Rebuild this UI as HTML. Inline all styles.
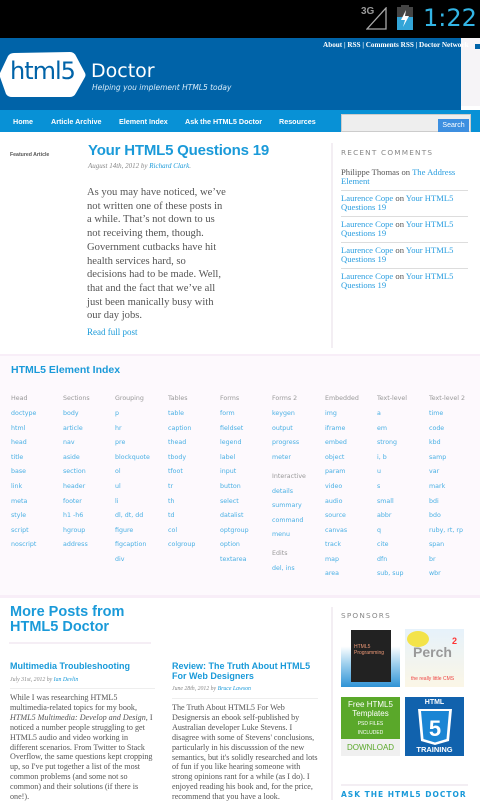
<!DOCTYPE html>
<html><head><meta charset="utf-8">
<style>
*{margin:0;padding:0;box-sizing:border-box}
body{width:480px;height:800px;overflow:hidden;background:#fff;position:relative;font-family:"Liberation Sans",sans-serif}
.a{position:absolute;white-space:nowrap}
.serif{font-family:"Liberation Serif",serif}
.blue{color:#1a9ad9}
.ei{font-size:6.3px;color:#4ab0e4;font-family:"DejaVu Sans",sans-serif}
.eh{font-size:6.3px;color:#999;font-family:"DejaVu Sans",sans-serif}
.ttl{font-family:"Liberation Sans",sans-serif;color:#1a9ad9}
.cm{font-size:8.6px;line-height:9px;color:#555}
.cm b{font-weight:normal;color:#2a9ee0}
.hr{position:absolute;height:1px;background:#ddd}
</style></head><body>
<div class="a" style="left:0;top:0;width:480px;height:38px;background:#000"></div>
<div class="a" style="left:361px;top:6px;font-size:10px;color:#999;font-weight:bold">3G</div>
<svg class="a" style="left:366px;top:7px" width="22" height="24"><path d="M20 1 L20 22 L1 22 Z" fill="none" stroke="#aaa" stroke-width="1.3"/></svg>
<div class="a" style="left:397px;top:7px;width:16px;height:23px;background:#444"></div>
<div class="a" style="left:401px;top:5px;width:8px;height:3px;background:#444"></div>
<div class="a" style="left:397px;top:17px;width:16px;height:13px;background:#33a5d8"></div>
<svg class="a" style="left:397px;top:7px" width="16" height="23"><path d="M9 3 L4 13 H8 L6 20 L12 9 H8 Z" fill="#fff"/></svg>
<div class="a" style="left:423px;top:4px;font-size:24px;color:#33b5e5;font-family:'DejaVu Sans',sans-serif">1:22</div>
<div class="a" style="left:0;top:38px;width:461px;height:72px;background:#0063a8"></div>
<div class="a" style="left:461px;top:38px;width:19px;height:68px;background:#f6f4f7"></div>
<div class="a" style="left:0;top:38px;width:474px;height:14px;overflow:hidden"><div class="a serif" style="left:323px;top:3px;font-size:7.2px;color:#fff;font-weight:bold">About | RSS | Comments RSS | Doctor Network</div></div>
<div class="a" style="left:475px;top:44px;width:5px;height:5px;background:#0063a8"></div>
<svg class="a" style="left:0;top:51px" width="86" height="47"><path d="M14 2 L70 1 Q74 1 76 5 L85 22 Q86 24 85 26 L76 42 Q74 46 70 46 L12 46 Q8 46 6 43 L0 26 Q-1 24 0 22 L8 5 Q10 2 14 2Z" fill="#fff"/></svg>
<div class="a" style="left:10px;top:57px;font-size:24px;color:#0063a8;font-family:'DejaVu Sans',sans-serif;letter-spacing:-1px">html5</div>
<div class="a" style="left:91px;top:60px;font-size:19px;color:#fff;font-family:'DejaVu Sans',sans-serif">Doctor</div>
<div class="a" style="left:92px;top:83px;font-size:7.5px;color:#d8ecfa;font-style:italic;font-family:'DejaVu Sans',sans-serif">Helping you implement HTML5 today</div>
<div class="a" style="left:0;top:110px;width:480px;height:22px;background:#0891d6"></div>
<div class="a" style="left:13px;top:117px;font-size:7.2px;color:#fff;font-weight:bold">Home</div>
<div class="a" style="left:51px;top:117px;font-size:7.2px;color:#fff;font-weight:bold">Article Archive</div>
<div class="a" style="left:119px;top:117px;font-size:7.2px;color:#fff;font-weight:bold">Element Index</div>
<div class="a" style="left:185px;top:117px;font-size:7.2px;color:#fff;font-weight:bold">Ask the HTML5 Doctor</div>
<div class="a" style="left:279px;top:117px;font-size:7.2px;color:#fff;font-weight:bold">Resources</div>
<div class="a" style="left:341px;top:114px;width:130px;height:18px;background:#eee;border:1px solid #ccc"></div>
<div class="a" style="left:438px;top:119px;width:31px;height:13px;background:#3d8fe0;color:#fff;font-size:7px;text-align:center;line-height:13px">Search</div>
<div class="a" style="left:10px;top:152px;font-size:5.2px;color:#555;font-weight:bold">Featured Article</div>
<div class="a ttl" style="left:88px;top:142px;font-size:15px;font-weight:bold;letter-spacing:-0.2px">Your HTML5 Questions 19</div>
<div class="a serif" style="left:88px;top:162px;font-size:7px;color:#888;font-style:italic">August 14th, 2012 by <span class="blue">Richard Clark</span>.</div>
<div class="a serif" style="left:87px;top:186px;font-size:10.6px;line-height:13.7px;color:#555;white-space:normal;width:140px">As you may have noticed, we’ve not written one of these posts in a while. That’s not down to us not receiving them, though. Government cutbacks have hit health services hard, so decisions had to be made. Well, that and the fact that we’ve all just been manically busy with our day jobs.</div>
<div class="a serif blue" style="left:87px;top:327px;font-size:9px">Read full post</div>
<div class="a" style="left:331px;top:143px;width:2px;height:205px;background:#f3eef3"></div>
<div class="a" style="left:341px;top:148px;font-size:7.3px;color:#888;letter-spacing:1.2px;font-family:'DejaVu Sans',sans-serif">RECENT COMMENTS</div>
<div class="a serif cm" style="left:341px;top:168px">Philippe Thomas on <b>The Address</b><br><b>Element</b></div>
<div class="hr" style="left:341px;top:190px;width:127px"></div>
<div class="a serif cm" style="left:341px;top:194px"><b>Laurence Cope</b> on <b>Your HTML5</b><br><b>Questions 19</b></div>
<div class="hr" style="left:341px;top:216px;width:127px"></div>
<div class="a serif cm" style="left:341px;top:220px"><b>Laurence Cope</b> on <b>Your HTML5</b><br><b>Questions 19</b></div>
<div class="hr" style="left:341px;top:242px;width:127px"></div>
<div class="a serif cm" style="left:341px;top:246px"><b>Laurence Cope</b> on <b>Your HTML5</b><br><b>Questions 19</b></div>
<div class="hr" style="left:341px;top:268px;width:127px"></div>
<div class="a serif cm" style="left:341px;top:272px"><b>Laurence Cope</b> on <b>Your HTML5</b><br><b>Questions 19</b></div>
<div class="a" style="left:0;top:354px;width:480px;height:243px;background:#fdf9fd"></div>
<div class="a" style="left:0;top:354px;width:480px;height:2px;background:#f8eef8"></div>
<div class="a ttl" style="left:11px;top:364px;font-size:10.5px;font-weight:bold;color:#1a9ad9">HTML5 Element Index</div>
<div id="ei"></div>
<script>
var cols=[[11,"Head",["doctype","html","head","title","base","link","meta","style","script","noscript"]],
[63,"Sections",["body","article","nav","aside","section","header","footer","h1 -h6","hgroup","address"]],
[115,"Grouping",["p","hr","pre","blockquote","ol","ul","li","dl, dt, dd","figure","figcaption","div"]],
[168,"Tables",["table","caption","thead","tbody","tfoot","tr","th","td","col","colgroup"]],
[220,"Forms",["form","fieldset","legend","label","input","button","select","datalist","optgroup","option","textarea"]],
[325,"Embedded",["img","iframe","embed","object","param","video","audio","source","canvas","track","map","area"]],
[377,"Text-level",["a","em","strong","i, b","u","s","small","abbr","q","cite","dfn","sub, sup"]],
[429,"Text-level 2",["time","code","kbd","samp","var","mark","bdi","bdo","ruby, rt, rp","span","br","wbr"]]];
var ys=[414,429,443,458,472,487,502,516,531,545,560,574];
var h="";
cols.forEach(function(c){h+='<div class="a eh" style="left:'+c[0]+'px;top:395px">'+c[1]+'</div>';
c[2].forEach(function(t,i){h+='<div class="a ei" style="left:'+c[0]+'px;top:'+(ys[i]-4)+'px">'+t+'</div>';});});
var f2=[["h","Forms 2",399],["i","keygen",414],["i","output",429],["i","progress",443],["i","meter",458],["h","Interactive",477],["i","details",492],["i","summary",506],["i","command",521],["i","menu",535],["h","Edits",554],["i","del, ins",569]];
f2.forEach(function(e){h+='<div class="a '+(e[0]=="h"?"eh":"ei")+'" style="left:272px;top:'+(e[2]-4)+'px">'+e[1]+'</div>';});
document.getElementById("ei").innerHTML=h;
</script>
<div class="a" style="left:0;top:595px;width:480px;height:3px;background:#f8eef8"></div>
<div class="a ttl" style="left:10px;top:605px;font-size:14.5px;line-height:15px;font-weight:bold;color:#1a9ad9">More Posts from<br>HTML5 Doctor</div>
<div class="a" style="left:9px;top:642px;width:142px;height:2px;background:#f5eef5"></div>
<div class="a ttl" style="left:10px;top:661px;font-size:9px;font-weight:bold">Multimedia Troubleshooting</div>
<div class="a serif" style="left:10px;top:677px;font-size:5.8px;color:#888;font-style:italic">July 31st, 2012 by <span class="blue">Ian Devlin</span></div>
<div class="hr" style="left:10px;top:688px;width:145px;background:#eee"></div>
<div class="a serif" style="left:10px;top:693px;width:147px;white-space:normal;font-size:8.1px;line-height:9.9px;color:#555">While I was researching HTML5 multimedia-related topics for my book, <i>HTML5 Multimedia: Develop and Design</i>, I noticed a number people struggling to get HTML5 audio and video working in different scenarios. From Twitter to Stack Overflow, the same questions kept cropping up, so I've put together a list of the most common problems (and some not so common) and their solutions (if there is one!).</div>
<div class="a ttl" style="left:172px;top:661px;font-size:9px;line-height:10px;font-weight:bold">Review: The Truth About HTML5<br>For Web Designers</div>
<div class="a serif" style="left:172px;top:686px;font-size:5.8px;color:#888;font-style:italic">June 28th, 2012 by <span class="blue">Bruce Lawson</span></div>
<div class="hr" style="left:172px;top:698px;width:146px;background:#eee"></div>
<div class="a serif" style="left:172px;top:703px;width:147px;white-space:normal;font-size:8.1px;line-height:9.9px;color:#555">The Truth About HTML5 For Web Designersis an ebook self-published by Australian developer Luke Stevens. I disagree with some of Stevens' conclusions, particularly in his discusssion of the new semantics, but it's solidly researched and lots of fun if you like hearing someone with strong opinions rant for a while (as I do). I enjoyed reading his book and, for the price, recommend that you have a look.</div>
<div class="a" style="left:331px;top:607px;width:2px;height:193px;background:#f3eef3"></div>
<div class="a" style="left:341px;top:611px;font-size:7.3px;color:#888;letter-spacing:1.2px;font-family:'DejaVu Sans',sans-serif">SPONSORS</div>
<div class="a" style="left:341px;top:629px;width:59px;height:58px;background:linear-gradient(#fff 30%,#9fd0ee 60%,#2f93d6)"></div>
<div class="a" style="left:351px;top:630px;width:40px;height:52px;background:#222;color:#e97;font-size:5px;padding:14px 3px">HTML5<br>Programming</div>
<div class="a" style="left:405px;top:629px;width:59px;height:58px;background:linear-gradient(#e6f2fb,#fbf6e6)"></div>
<div class="a" style="left:407px;top:631px;width:22px;height:16px;border-radius:50%;background:#f3e34a"></div>
<div class="a" style="left:413px;top:644px;font-size:14px;color:#999;font-weight:bold">Perch</div>
<div class="a" style="left:452px;top:636px;font-size:9px;color:#f33;font-weight:bold">2</div>
<div class="a" style="left:411px;top:676px;font-size:5px;color:#e44">the really little CMS</div>
<div class="a" style="left:341px;top:697px;width:59px;height:42px;background:#5aa82a;color:#fff;text-align:center;font-size:8px;line-height:9px;padding-top:3px">Free HTML5<br>Templates<br><span style="font-size:5px;line-height:5px">PSD FILES<br>INCLUDED</span></div>
<div class="a" style="left:341px;top:739px;width:59px;height:17px;background:#f0f0f0;color:#5aa82a;font-size:8px;text-align:center;line-height:17px">DOWNLOAD</div>
<div class="a" style="left:405px;top:697px;width:59px;height:59px;background:#1162ad"></div>
<div class="a" style="left:413px;top:699px;font-size:7px;color:#fff;font-weight:bold;width:43px;text-align:center">HTML</div>
<svg class="a" style="left:417px;top:708px" width="36" height="38"><path d="M1 1 H35 L32 33 L18 37 L4 33Z" fill="#fff"/><path d="M4 3 H32 L29.5 31 L18 34.5 L6.5 31Z" fill="#1a85d4"/><text x="18" y="28" font-size="22" font-weight="bold" fill="#fff" text-anchor="middle" font-family="Liberation Sans">5</text></svg>
<div class="a" style="left:405px;top:745px;width:59px;font-size:7.5px;color:#fff;font-weight:bold;text-align:center">TRAINING</div>
<div class="a" style="left:341px;top:784px;width:127px;height:2px;background:#f3eef3"></div>
<div class="a" style="left:341px;top:790px;font-size:7.5px;color:#1a9ad9;font-weight:bold;letter-spacing:1px;font-family:'DejaVu Sans',sans-serif">ASK THE HTML5 DOCTOR</div>
</body></html>
